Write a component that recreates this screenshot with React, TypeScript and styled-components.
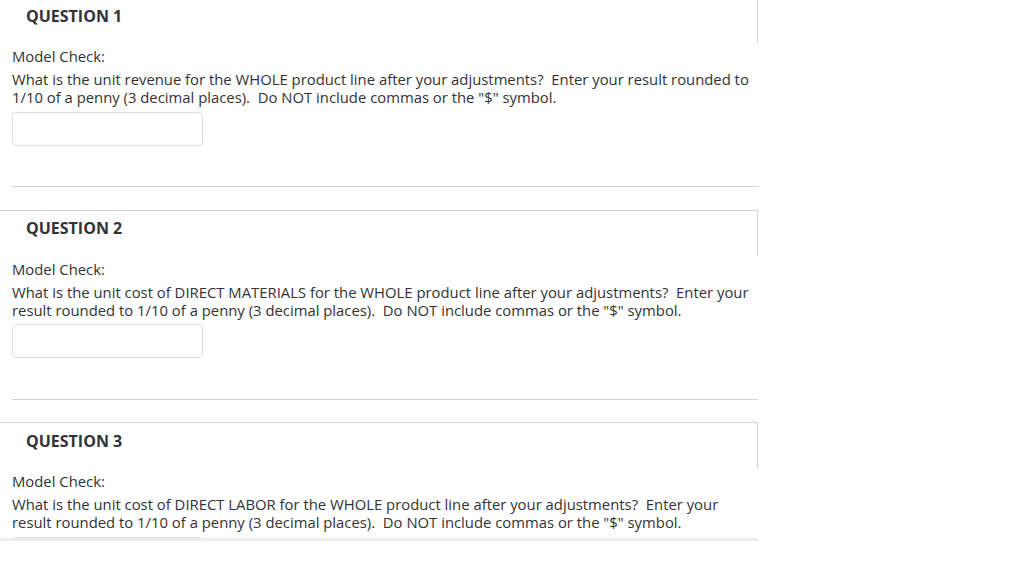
import React from "react";
import styled, { createGlobalStyle } from "styled-components";

const GlobalStyle = createGlobalStyle`
  html, body {
    margin: 0;
    padding: 0;
    background: #fff;
  }
  body {
    font-family: "Open Sans", "Liberation Sans", sans-serif;
    color: #333;
  }
`;

// Page clipped at the bottom like the original frame
const Frame = styled.div`
  width: 758px;
  height: 538px;
  overflow: hidden;
  border-bottom: 3px solid #ececec;
`;

const QuestionList = styled.div`
  margin-top: -3px;
`;

const Question = styled.section`
  height: 212.5px;
`;

const Header = styled.div`
  box-sizing: border-box;
  height: 46px;
  border-top: 1px solid #d4d4d4;
  border-right: 1px solid #d4d4d4;
  display: flex;
  align-items: center;
  padding-left: 26px;
  padding-bottom: 10px;
`;

const Title = styled.h3`
  margin: 0;
  font-size: 16px;
  font-weight: 700;
  color: #333;
`;

const Body = styled.div`
  padding-left: 12px;
`;

const Label = styled.div`
  margin-top: 4px;
  font-size: 14.85px;
  line-height: 18px;
`;

const Prompt = styled.p`
  margin: 5px 0 0;
  font-size: 14.85px;
  line-height: 18px;
  max-width: 742px;
`;

const Answer = styled.input`
  display: block;
  box-sizing: border-box;
  margin-top: 5.5px;
  width: 191px;
  height: 34px;
  border: 1px solid #dedede;
  border-radius: 4px;
  background: #fff;
  font-family: inherit;
  font-size: 14px;
  padding: 0 8px;
  outline: none;
`;

const Divider = styled.hr`
  margin: 40.5px 0 0;
  border: 0;
  border-top: 1px solid #d4d4d4;
`;

const questions = [
  {
    n: 1,
    text: 'What is the unit revenue for the WHOLE product line after your adjustments?\u00a0 Enter your result rounded to 1/10 of a penny (3 decimal places).\u00a0 Do NOT include commas or the "$" symbol.',
  },
  {
    n: 2,
    text: 'What is the unit cost of DIRECT MATERIALS for the WHOLE product line after your adjustments?\u00a0 Enter your result rounded to 1/10 of a penny (3 decimal places).\u00a0 Do NOT include commas or the "$" symbol.',
  },
  {
    n: 3,
    text: 'What is the unit cost of DIRECT LABOR for the WHOLE product line after your adjustments?\u00a0 Enter your result rounded to 1/10 of a penny (3 decimal places).\u00a0 Do NOT include commas or the "$" symbol.',
  },
];

const App: React.FC = () => {
  return (
    <>
      <GlobalStyle />
      <Frame>
        <QuestionList>
          {questions.map((q) => (
            <Question key={q.n}>
              <Header>
                <Title>QUESTION {q.n}</Title>
              </Header>
              <Body>
                <Label>Model Check:</Label>
                <Prompt>{q.text}</Prompt>
                <Answer type="text" aria-label={`Answer ${q.n}`} />
                <Divider />
              </Body>
            </Question>
          ))}
        </QuestionList>
      </Frame>
    </>
  );
};

export default App;
